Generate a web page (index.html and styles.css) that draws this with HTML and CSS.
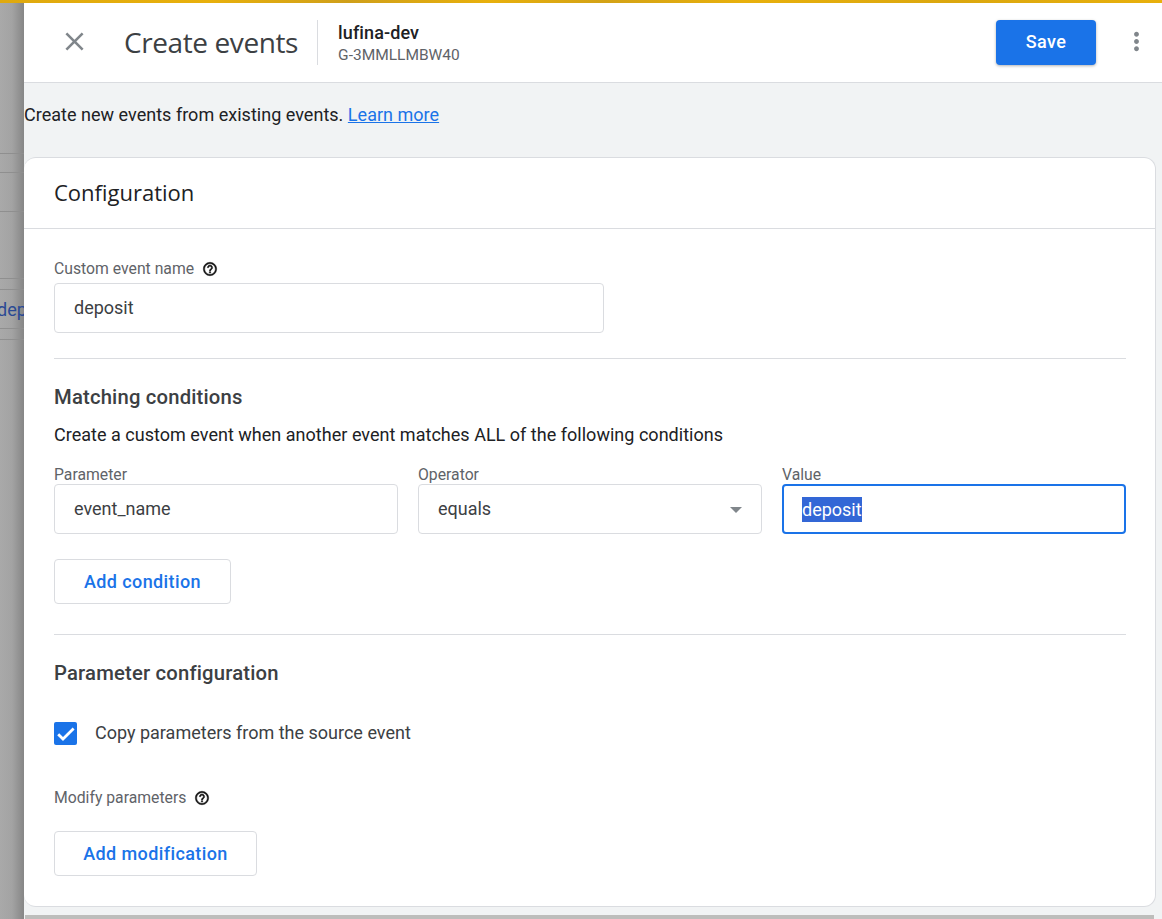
FILE: index.html
```html
<!DOCTYPE html>
<html lang="en">
<head>
  <meta charset="UTF-8" />
  <title>Create events</title>
  <link rel="stylesheet" href="styles.css">
</head>
<body>
  <div class="topbar"></div>
  <div class="page">
    <div class="backdrop">
      <div class="back-row r1"></div>
      <div class="back-row r2"></div>
      <div class="back-row r3"></div>
      <div class="back-row r4"></div>
      <div class="back-row r5"></div>
      <div class="back-row r6"><span class="back-link">dep</span></div>
      <div class="back-row r7"></div>
    </div>
    <div class="panel">
      <header class="header">
        <button class="close" aria-label="Close">
          <svg width="31" height="31" viewBox="0 0 24 24"><path d="M19 6.41 17.59 5 12 10.59 6.41 5 5 6.41 10.59 12 5 17.59 6.41 19 12 13.41 17.59 19 19 17.59 13.41 12z" fill="#80868b"/></svg>
        </button>
        <h1 class="title">Create events</h1>
        <div class="account">
          <div class="account-name">lufina-dev</div>
          <div class="account-id">G-3MMLLMBW40</div>
        </div>
        <button class="save">Save</button>
        <button class="more" aria-label="More">
          <svg width="29" height="29" viewBox="0 0 24 24"><path d="M12 8c1.1 0 2-.9 2-2s-.9-2-2-2-2 .9-2 2 .9 2 2 2zm0 2c-1.1 0-2 .9-2 2s.9 2 2 2 2-.9 2-2-.9-2-2-2zm0 6c-1.1 0-2 .9-2 2s.9 2 2 2 2-.9 2-2-.9-2-2-2z" fill="#80868b"/></svg>
        </button>
      </header>

      <main class="body">
        <p class="intro">Create new events from existing events. <a href="#">Learn more</a></p>

        <section class="card">
          <h2 class="card-title">Configuration</h2>
          <div class="card-body">
            <div class="section name-section">
              <div class="field-label">Custom event name
                <svg class="help" width="16" height="16" viewBox="0 0 24 24"><path d="M11 18h2v-2h-2v2zm1-16C6.48 2 2 6.48 2 12s4.48 10 10 10 10-4.48 10-10S17.52 2 12 2zm0 18c-4.41 0-8-3.59-8-8s3.59-8 8-8 8 3.59 8 8-3.59 8-8 8zm0-14c-2.21 0-4 1.79-4 4h2c0-1.1.9-2 2-2s2 .9 2 2c0 2-3 1.75-3 5h2c0-2.25 3-2.5 3-5 0-2.21-1.79-4-4-4z"/></svg>
              </div>
              <div class="input name-input">deposit</div>
            </div>

            <div class="section match-section">
              <h3 class="section-title">Matching conditions</h3>
              <p class="section-desc">Create a custom event when another event matches ALL of the following conditions</p>
              <div class="condition">
                <div>
                  <div class="col-label">Parameter</div>
                  <div class="input">event_name</div>
                </div>
                <div>
                  <div class="col-label">Operator</div>
                  <div class="input select">equals<span class="caret"></span></div>
                </div>
                <div>
                  <div class="col-label">Value</div>
                  <div class="input focused"><span class="selected">deposit</span></div>
                </div>
              </div>
              <button class="outline add-condition">Add condition</button>
            </div>

            <div class="params">
              <h3 class="section-title">Parameter configuration</h3>
              <div class="check-row">
                <span class="checkbox">
                  <svg width="23" height="23" viewBox="0 0 23 23"><path d="M4.2 12.2 9 17 19.6 6.6" fill="none" stroke="#fff" stroke-width="2.8"/></svg>
                </span>
                <span>Copy parameters from the source event</span>
              </div>
              <div class="field-label modify">Modify parameters
                <svg class="help" width="16" height="16" viewBox="0 0 24 24"><path d="M11 18h2v-2h-2v2zm1-16C6.48 2 2 6.48 2 12s4.48 10 10 10 10-4.48 10-10S17.52 2 12 2zm0 18c-4.41 0-8-3.59-8-8s3.59-8 8-8 8 3.59 8 8-3.59 8-8 8zm0-14c-2.21 0-4 1.79-4 4h2c0-1.1.9-2 2-2s2 .9 2 2c0 2-3 1.75-3 5h2c0-2.25 3-2.5 3-5 0-2.21-1.79-4-4-4z"/></svg>
              </div>
              <button class="outline add-mod">Add modification</button>
            </div>
          </div>
        </section>
        <div class="under"></div>
      </main>
    </div>
  </div>
</body>
</html>
```

FILE: styles.css
```css
* {
  box-sizing: border-box;
}
html, body {
  height: 100%;
}
body {
  margin: 0;
  overflow: hidden;
  font-family: Roboto, 'Liberation Sans', sans-serif;
  color: #202124;
  background: #f1f3f4;
}
button {
  font-family: inherit;
  cursor: pointer;
}
.topbar {
  height: 3px;
  background: linear-gradient(to right, #dfa90e 0, #e8b00c 18%, #cf9f1a 30%, #e8b00c 42%, #d3a216 52%, #e8b00c 64%, #dba70f 82%, #e8b00c 100%);
}
.page {
  display: flex;
  height: 916px;
}

/* page behind the dialog, dimmed */
.backdrop {
  width: 24px;
  flex: none;
  background: linear-gradient(to right, #a9a9a9 0, #a3a3a3 12px, #868686 24px);
  padding-top: 80px;
}
.back-row {
  border-bottom: 1px solid #8f8f8f;
}
.r1 { height: 71px; }
.r2 { height: 19px; }
.r3 { height: 39px; }
.r4 { height: 67px; }
.r5 { height: 11px; }
.r6 {
  height: 39px;
  padding-top: 8px;
  font-size: 18px;
  line-height: 24px;
  overflow: hidden;
  white-space: nowrap;
}
.r7 { height: 11px; }
.back-link {
  color: #2a4a94;
  margin-left: -3px;
  display: inline-block;
}

.panel {
  flex: 1;
  min-width: 0;
  display: flex;
  flex-direction: column;
}
.header {
  display: flex;
  align-items: center;
  height: 80px;
  flex: none;
  background: #fff;
  border-bottom: 1px solid #dadce0;
  padding: 0 14px 0 38px;
}
.close, .more {
  border: 0;
  background: none;
  padding: 0;
  width: 24px;
  height: 24px;
  margin-bottom: 2px;
  display: flex;
  align-items: center;
  justify-content: center;
}
.close svg, .more svg {
  flex: none;
}
.title {
  margin: 0 19px 2px 38px;
  font-size: 28px;
  font-weight: 400;
  font-family: 'Open Sans', Roboto, sans-serif;
  letter-spacing: -0.4px;
  color: #3c4043;
}
.account {
  border-left: 1px solid #dadce0;
  padding-left: 20px;
  height: 45px;
}
.account-name {
  font-size: 18px;
  font-weight: 500;
  line-height: 24px;
  letter-spacing: 0.1px;
  margin-top: 1px;
}
.account-id {
  font-size: 15.5px;
  line-height: 20px;
  color: #5f6368;
}
.save {
  margin-left: auto;
  margin-right: 28px;
  width: 100px;
  height: 45px;
  padding: 0 0 2px;
  border: 0;
  border-radius: 4px;
  background: #1a73e8;
  color: #fff;
  font-size: 18px;
  font-weight: 500;
  letter-spacing: 0.4px;
  box-shadow: 0 1px 3px rgba(60,64,67,.4);
}

.body {
  flex: 1;
  position: relative;
  min-height: 0;
}
.intro {
  margin: 0;
  height: 74px;
  padding-top: 22px;
  font-size: 18px;
  line-height: 20px;
  letter-spacing: 0.02px;
}
.intro a {
  color: #1a73e8;
}
.card {
  width: 1132px;
  height: 750px;
  background: #fff;
  border: 1px solid #dadce0;
  border-left: 0;
  border-radius: 12px;
}
.card-title {
  margin: 0;
  height: 71px;
  padding: 19px 30px 0;
  font-size: 22px;
  line-height: 30px;
  font-weight: 400;
  font-family: 'Open Sans', Roboto, sans-serif;
  border-bottom: 1px solid #dadce0;
}
.card-body {
  padding: 0 29px 0 30px;
}
.section {
  border-bottom: 1px solid #dadce0;
}
.name-section {
  height: 130px;
  padding-top: 30px;
}
.field-label {
  display: flex;
  align-items: center;
  gap: 8px;
  font-size: 15.75px;
  line-height: 20px;
  color: #5f6368;
}
.help {
  fill: #111;
  stroke: #111;
  stroke-width: 0.7;
}
.input {
  display: flex;
  align-items: center;
  height: 50px;
  padding: 0 19px 2px;
  border: 1px solid #dadce0;
  border-radius: 4px;
  font-size: 18px;
  color: #3c4043;
}
.name-input {
  width: 550px;
  margin-top: 4px;
}
.match-section {
  height: 276px;
  padding-top: 24px;
}
.section-title {
  margin: 0;
  font-size: 20.25px;
  line-height: 28px;
  font-weight: 500;
  letter-spacing: 0.18px;
  color: #3c4043;
}
.section-desc {
  margin: 14px 0 0;
  font-size: 18px;
  line-height: 20px;
  letter-spacing: 0.02px;
}
.condition {
  display: grid;
  grid-template-columns: 344px 344px 344px;
  gap: 20px;
  margin-top: 20px;
}
.col-label {
  height: 19px;
  font-size: 15.75px;
  line-height: 20px;
  color: #5f6368;
}
.select {
  position: relative;
}
.caret {
  position: absolute;
  right: 19px;
  top: 22px;
  border: 6px solid transparent;
  border-top: 6px solid #80868b;
  border-bottom: 0;
}
.focused {
  border: 2px solid #1a73e8;
  padding: 0 18px;
}
.selected {
  background: #3367d6;
  color: #fff;
  line-height: 25px;
}
.outline {
  display: block;
  height: 45px;
  padding: 0;
  background: #fff;
  border: 1px solid #dadce0;
  border-radius: 4px;
  color: #1a73e8;
  font-size: 18px;
  font-weight: 500;
  letter-spacing: 0.4px;
}
.add-condition {
  width: 177px;
  margin-top: 25px;
}
.params {
  padding-top: 24px;
}
.check-row {
  display: flex;
  align-items: center;
  gap: 18px;
  margin-top: 34px;
  font-size: 18px;
  line-height: 24px;
  color: #3c4043;
}
.checkbox {
  width: 23px;
  height: 23px;
  border-radius: 2px;
  background: #1a73e8;
  display: flex;
}
.modify {
  margin-top: 43px;
}
.add-mod {
  width: 203px;
  margin-top: 23px;
}
.under {
  margin: 8px 0 0 1px;
  width: 1129px;
  height: 10px;
  background: #bdbdbb;
}
```
